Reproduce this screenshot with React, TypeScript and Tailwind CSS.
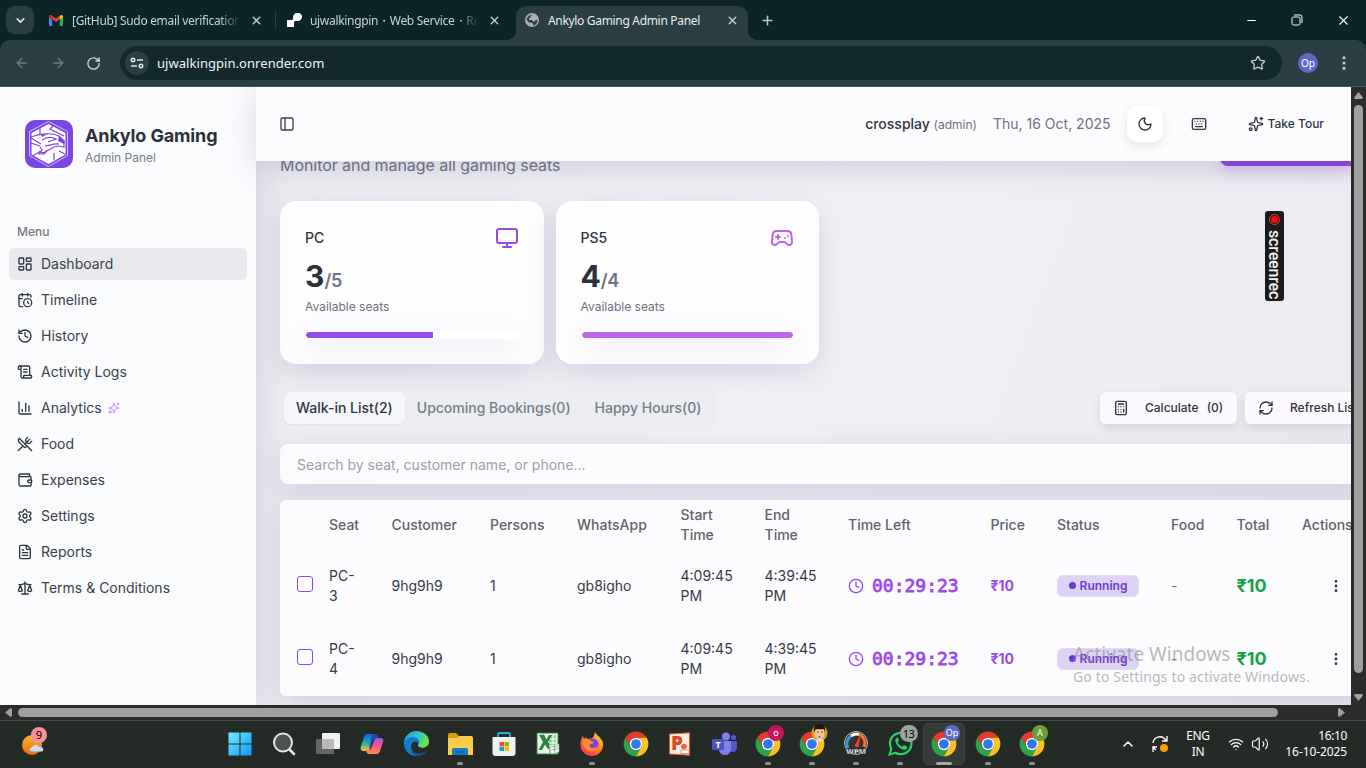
import React from "react";
import {
  ArrowLeft, ArrowRight, Calculator, CalendarClock, ChartColumn, ChevronDown, ChevronUp, Clock, EllipsisVertical,
  FileText, Gamepad2, History, Keyboard, LayoutDashboard, Minus, Monitor, Moon, PanelLeft, Plus, RefreshCw,
  RotateCw, Scale, ScrollText, Settings, Sparkles, Star, UtensilsCrossed, Volume2, Wallet, Wifi, X,
} from "lucide-react";

const UI = "font-['Noto_Sans','Open_Sans',sans-serif]";

function TabClose() {
  return <X size={13} strokeWidth={2.6} className="shrink-0 text-[#c3d0d1]" />;
}

function Gmail() {
  return (
    <svg width="14" height="11" viewBox="0 0 14 11" className="shrink-0">
      <path d="M0 1.5V10a1 1 0 0 0 1 1h2.2V4z" fill="#4285f4" />
      <path d="M14 1.5V10a1 1 0 0 1-1 1h-2.200V4z" fill="#34a853" />
      <path d="M0 1.500C0 .2 1.600-.4 2.700.4L7 3.700 11.300.4 10.800 4 7 6.900 3.200 4 0 2.500z" fill="#ea4335" />
      <path d="M10.800.8C12 -.4 14 0 14 1.600v1l-3.200 2.400z" fill="#fbbc04" />
      <path d="M0 1.500C0 .2 1.800-.4 3.200.8V5L0 2.600z" fill="#c5221f" />
    </svg>
  );
}

function BrowserTabs() {
  return (
    <div className={`flex h-10 items-center bg-[#0b2427] text-[12px] tracking-[-0.32px] text-[#c9d6d6] ${UI}`}>
      <div className="ml-1.5 flex size-7 items-center justify-center rounded-[9px] bg-[#293f44]">
        <ChevronDown size={13} strokeWidth={3} className="text-[#dfe8e8]" />
      </div>
      <div className="ml-[15px] flex w-[214px] items-center">
        <Gmail />
        <div className="mt-px ml-[9px] w-[168px] overflow-hidden whitespace-nowrap [mask-image:linear-gradient(to_right,#000_88%,transparent)]">
          [GitHub] Sudo email verification code
        </div>
        <div className="ml-[10px]"><TabClose /></div>
      </div>
      <div className="ml-[12px] h-4 w-px bg-[#2b4246]" />
      <div className="ml-[11px] flex w-[214px] items-center">
        <svg width="15" height="15" viewBox="0 0 15 15" className="shrink-0">
          <path d="M6 6c0-5 2-6 5-6s4 2 4 4-2 4-4 4H8l-1 1v5H0V7h5z" fill="#fff" />
        </svg>
        <div className="mt-px ml-2 w-[168px] overflow-hidden whitespace-nowrap [mask-image:linear-gradient(to_right,#000_88%,transparent)]">
          ujwalkingpin・Web Service・Render
        </div>
        <div className="ml-[10px]"><TabClose /></div>
      </div>
      <div className="relative ml-[15px] mt-1.5 flex h-[34px] w-[232px] items-center rounded-t-[10px] bg-[#293f44] text-[#e6eeee]">
        <span className="absolute bottom-0 -left-2.5 size-2.5 bg-[radial-gradient(circle_at_0_0,transparent_10px,#293f44_10.5px)]" />
        <span className="absolute -right-2.5 bottom-0 size-2.5 bg-[radial-gradient(circle_at_100%_0,transparent_10px,#293f44_10.5px)]" />
        <svg width="14" height="14" viewBox="0 0 14 14" className="mb-1.5 ml-[9px] shrink-0">
          <circle cx="7" cy="7" r="7" fill="#a9aeb5" />
          <path d="M8 1.500 5.500 3v1.600L4 5.500v1.500h3l1 1.500h2l.6-1.500L12.500 7 12 10l-2 2-2 .7.300-1.700-2-1.500H4L1.500 6.500 2 5 4 2.500z" fill="#293f44" />
        </svg>
        <div className="mb-[5px] ml-[9px] w-[178px] whitespace-nowrap">Ankylo Gaming Admin Panel</div>
        <div className="mb-1.5"><TabClose /></div>
      </div>
      <Plus size={15} strokeWidth={2.4} className="ml-[12px] text-[#b9c8c9]" />
      <div className="ml-auto mr-[15px] flex items-center gap-[33px] text-white">
        <Minus size={13} strokeWidth={1.900} />
        <svg width="12" height="12" viewBox="0 0 12 12" fill="none" stroke="currentColor">
          <rect x="1" y="3" width="8" height="8" rx="1.500" />
          <path d="M3 1h6a2 2 0 0 1 2 2v6" />
        </svg>
        <X size={15} strokeWidth={1.800} />
      </div>
    </div>
  );
}

function AddressBar() {
  return (
    <div className="bg-[#0b2427]">
      <div className={`flex h-[47px] items-center rounded-t-[10px] border-b border-[#45575b] bg-[#293f44] ${UI}`}>
        <ArrowLeft size={16} className="ml-3.5 text-[#6b7d80]" />
        <ArrowRight size={16} className="ml-5 text-[#6b7d80]" />
        <RotateCw size={15} strokeWidth={2.3} className="ml-5 text-[#c6d3d4]" />
        <div className="ml-[19px] flex h-[34px] w-[1162px] items-center rounded-full bg-[#11292d] pl-[5px] pr-4">
          <div className="flex size-6 items-center justify-center rounded-full bg-[#293f44]">
            <svg width="14" height="14" viewBox="0 0 14 14" fill="none" stroke="#e0e8e8" strokeWidth="1.600">
              <circle cx="3" cy="4" r="1.700" /><path d="M7 4h6M1 10h6" /><circle cx="11" cy="10" r="1.700" />
            </svg>
          </div>
          <div className="mt-px ml-2 text-[13px] tracking-[0.05px] text-[#f0f5f5]">ujwalkingpin.onrender.com</div>
          <Star size={16} strokeWidth={1.900} className="ml-auto text-[#c6d3d4]" />
        </div>
        <div className="ml-[16px] flex size-5 items-center justify-center rounded-full bg-[#5c6bc0] text-[10px] text-white">Op</div>
        <svg width="4" height="14" viewBox="0 0 4 14" className="ml-6 fill-[#c6d3d4]">
          <circle cx="2" cy="1.700" r="1.500" /><circle cx="2" cy="7" r="1.500" /><circle cx="2" cy="12.300" r="1.500" />
        </svg>
      </div>
    </div>
  );
}

function Logo() {
  return (
    <svg width="48" height="48" viewBox="0 0 48 48" className="shrink-0">
      <rect width="48" height="48" rx="10" fill="#7c45e0" />
      <path d="M23.500 1.500 42.500 11.500v24L23.500 46.500 4.500 35.500v-24z" fill="none" stroke="#d3c1f6" strokeWidth="1" />
      <path d="M23.500 4 40.500 13v21.500L23.500 44 6.500 34.500V13z" fill="#fff" />
      <g fill="none" stroke="#7c45e0" strokeWidth="1.200">
        <path d="M15 8v6M28 6l-3 3 14 7M34 31l6 3M29 40v-7M7 36l9-5" />
        <path d="M6 17c8-3 20-5 28-1l5 5v6l-6-1-4 1-7 4-3 3-5 0 3-4-2-3" />
        <path d="M17 20c6-4 10-3 14-1l-8 3M20 26c5 0 8-3 14-2M6 18l10 6M6 23l9 3" />
      </g>
      <path d="M34 16l6 5-1 3-6-3zM14 32l5 0 4-3-4 5zM16 15l7-1-6 3z" fill="#7c45e0" />
    </svg>
  );
}

const menu = [
  { icon: LayoutDashboard, label: "Dashboard" },
  { icon: CalendarClock, label: "Timeline" },
  { icon: History, label: "History" },
  { icon: ScrollText, label: "Activity Logs" },
  { icon: ChartColumn, label: "Analytics" },
  { icon: UtensilsCrossed, label: "Food" },
  { icon: Wallet, label: "Expenses" },
  { icon: Settings, label: "Settings" },
  { icon: FileText, label: "Reports" },
  { icon: Scale, label: "Terms & Conditions" },
];

function Sidebar() {
  return (
    <aside className="relative z-10 w-64 shrink-0 bg-[#fafbfd] px-[9px] pt-[33px] shadow-[4px_0_28px_rgba(90,80,160,0.16)]">
      <div className="flex items-center gap-3 pl-4">
        <Logo />
        <div>
          <div className="text-[18px] leading-[28px] font-bold tracking-[-0.13px] text-[#2b303b]">Ankylo Gaming</div>
          <div className="text-[12px] leading-4 text-[#747b8b]">Admin Panel</div>
        </div>
      </div>
      <div className="mt-12 flex h-8 items-center pl-2 text-[12px] font-medium text-[#747880]">Menu</div>
      <nav className="flex flex-col gap-1">
        {menu.map(({ icon: Icon, label }, i) => (
          <div key={label} className={`flex h-8 items-center gap-2 rounded-md px-2 text-[14px] leading-5 text-[#3a404c] ${i === 0 ? "bg-[#e8e9ed]" : ""}`}>
            <Icon size={16} className="text-[#2f3541]" />
            <span>{label}</span>
            {label === "Analytics" && <Sparkles size={12} className="-ml-0.5 text-[#c98bf3]" />}
          </div>
        ))}
      </nav>
    </aside>
  );
}

function Header() {
  return (
    <header className="relative z-20 flex h-[74px] shrink-0 items-center bg-[#fcfcfe] pl-[23px] pr-[27px] shadow-[0_6px_30px_rgba(80,70,150,0.2)]">
      <PanelLeft size={16} className="text-[#3a404c]" />
      <div className="ml-auto text-[14px] leading-5 font-medium text-[#2f3541]">
        crossplay <span className="text-[12px] font-normal text-[#6b7280]">(admin)</span>
      </div>
      <div className="ml-4 text-[14px] leading-5 text-[#6b7280]">Thu, 16 Oct, 2025</div>
      <div className="ml-4 flex size-9 items-center justify-center rounded-[10px] bg-white shadow-[0_4px_10px_rgba(60,60,90,0.12)]">
        <Moon size={16} className="text-[#2f3541]" />
      </div>
      <Keyboard size={16} className="ml-7 text-[#2f3541]" />
      <Sparkles size={16} className="ml-[41px] text-[#2f3541]" />
      <span className="ml-1 text-[12px] font-medium text-[#2f3541]">Take Tour</span>
    </header>
  );
}

function SeatCard({ name, free, total, icon, fill }: { name: string; free: number; total: number; icon: React.ReactNode; fill: string }) {
  return (
    <div className="h-[163px] w-[263.5px] rounded-2xl bg-[#fdfdfe] p-[25px] shadow-[0_8px_28px_rgba(80,70,150,0.16)]">
      <div className="flex h-6 items-center justify-between">
        <span className="text-[14px] leading-5 font-medium text-[#2f3541]">{name}</span>
        {icon}
      </div>
      <div className="mt-2 text-[30px] leading-9 font-bold text-[#2b303b]">
        {free}<span className="text-[18px] font-semibold tracking-[-0.3px] text-[#6b7280]">/{total}</span>
      </div>
      <div className="text-[12px] leading-4 text-[#6b7280]">Available seats</div>
      <div className="mt-4 h-2 overflow-hidden rounded-full border border-white bg-white shadow-[0_8px_28px_rgba(80,70,150,0.16)]">
        <div className={`h-full rounded-l-full ${fill}`} style={{ width: `${(free / total) * 100}%` }} />
      </div>
    </div>
  );
}

const gridCols = "grid grid-cols-[33px_62.5px_98.5px_87px_103.5px_84px_83.5px_142.5px_66.5px_114px_65.5px_65.5px_100px] items-center";

function BookingRow({ seat }: { seat: string }) {
  return (
    <div className={`${gridCols} h-[73px] text-[14px] leading-5 text-[#343a46]`}>
      <div className="mb-1 ml-[17px] size-4 rounded-[3px] border border-[#9145e6]" />
      <div className="px-4">PC-<br />{seat}</div>
      <div className="px-4">9hg9h9</div>
      <div className="px-4">1</div>
      <div className="px-4">gb8igho</div>
      <div className="px-4">4:09:45<br />PM</div>
      <div className="px-4">4:39:45<br />PM</div>
      <div className="flex items-center gap-2 pl-4 text-[#9a4be8]">
        <Clock size={16} className="shrink-0" />
        <span className="font-['DejaVu_Sans_Mono',monospace] text-[18px] [-webkit-text-stroke:0.8px_#9a4be8]">00:29:23</span>
      </div>
      <div className="pl-4 font-bold text-[#9a4be8]">₹10</div>
      <div className="pl-4">
        <div className="flex h-[22px] w-[82px] items-center justify-center gap-1 rounded-md border border-[#e3daf7] bg-[#dfd3f5] text-[12px] font-semibold text-[#6d38d2]">
          <span className="size-[7px] rounded-full bg-[#6d38d2]" />Running
        </div>
      </div>
      <div className="px-4 text-[#6b7280]">-</div>
      <div className="pl-4 text-[18px] font-bold text-[#16a34a]">₹10</div>
      <div className="flex justify-center"><EllipsisVertical size={16} strokeWidth={2.200} className="text-[#2f3541]" /></div>
    </div>
  );
}

function Dashboard() {
  return (
    <main className="min-h-0 flex-1 overflow-hidden bg-[linear-gradient(110deg,#ebecf0,#f1eff4_45%,#ece9f1)] pl-6">
      <div className="w-[1125px]">
        <div className="-mt-2 flex h-6 items-start justify-between">
          <p className="text-[16px] leading-6 tracking-[-0.06px] text-[#6b7280]">Monitor and manage all gaming seats</p>
          <div className="h-[13px] w-[185px] rounded-b-lg bg-[#8e44dc] shadow-[0_4px_14px_rgba(142,68,220,0.3)]" />
        </div>
        <div className="mt-6 flex gap-3">
          <SeatCard name="PC" free={3} total={5} fill="bg-[#944be8]" icon={<Monitor size={24} className="text-[#944be8]" />} />
          <SeatCard name="PS5" free={4} total={4} fill="rounded-r-full bg-[#bd66e6]" icon={<Gamepad2 size={24} className="text-[#bd66e6]" />} />
        </div>
        <div className="mt-6 flex h-10 items-center">
          <div className="flex h-10 w-[437px] items-center rounded-lg bg-[#eaecf0]/70 p-1 text-[14px] leading-5 font-medium whitespace-nowrap text-[#747b8b]">
            <span className="flex h-8 items-center rounded-md bg-[#f5f6f9] px-3 text-[#2f3541] shadow-[0_1px_2px_rgba(60,60,90,0.08)]">Walk-in List(2)</span>
            <span className="px-3">Upcoming Bookings(0)</span>
            <span className="px-3">Happy Hours(0)</span>
          </div>
          <div className="ml-[383px] flex h-8 w-[137px] items-center rounded-md bg-[#fbf9fd] pl-[13px] text-[12px] font-medium text-[#2f3541] shadow-[0_4px_10px_rgba(60,60,90,0.13)]">
            <Calculator size={16} />
            <span className="ml-4">Calculate</span><span className="ml-2">(0)</span>
          </div>
          <div className="ml-2 flex h-8 w-[150px] shrink-0 items-center rounded-md bg-[#fbf9fd] pl-[13px] text-[12px] font-medium whitespace-nowrap text-[#2f3541] shadow-[0_4px_10px_rgba(60,60,90,0.13)]">
            <RefreshCw size={16} /><span className="ml-4">Refresh List</span>
          </div>
        </div>
        <div className="mt-4 flex h-10 items-center rounded-lg bg-[#fcfbfe] pl-[17px] text-[14px] text-[#9ca1ac] shadow-[0_8px_28px_rgba(80,70,150,0.17)]">
          Search by seat, customer name, or phone...
        </div>
        <div className="relative mt-4 h-[196px] rounded-md bg-[#fcfbfe] shadow-[0_8px_28px_rgba(80,70,150,0.17)]">
          <div className={`${gridCols} h-[49px] pt-px text-[14px] leading-5 font-medium text-[#5e636c]`}>
            <div />
            <div className="px-4">Seat</div>
            <div className="px-4">Customer</div>
            <div className="px-4">Persons</div>
            <div className="px-4">WhatsApp</div>
            <div className="px-4">Start<br />Time</div>
            <div className="px-4">End<br />Time</div>
            <div className="px-4">Time Left</div>
            <div className="px-4">Price</div>
            <div className="px-4">Status</div>
            <div className="px-4">Food</div>
            <div className="px-4">Total</div>
            <div className="px-4">Actions</div>
          </div>
          <BookingRow seat="3" />
          <BookingRow seat="4" />
        </div>
      </div>
    </main>
  );
}

function VScroll() {
  return (
    <div className="flex w-[15px] flex-col items-center bg-[#2b2b2b]">
      <svg width="9" height="7" viewBox="0 0 9 7" className="mt-[5px] fill-[#9f9f9f]"><path d="M4.500 0 9 5.500 8 7H1L0 5.500z" /></svg>
      <div className="mt-1.5 h-[568px] w-[9px] rounded-full bg-[#9f9f9f]" />
      <svg width="9" height="7" viewBox="0 0 9 7" className="mt-[21px] fill-[#9f9f9f]"><path d="M4.500 7 9 1.500 8 0H1L0 1.500z" /></svg>
    </div>
  );
}

function HScroll() {
  return (
    <div className="flex h-[15px] items-center bg-[#2b2b2b]">
      <svg width="7" height="9" viewBox="0 0 7 9" className="ml-[5px] fill-[#9f9f9f]"><path d="M0 4.500 5.500 0 7 1v7L5.500 9z" /></svg>
      <div className="ml-1.5 h-[9px] w-[1260px] rounded-full bg-[#9f9f9f]" />
      <svg width="7" height="9" viewBox="0 0 7 9" className="ml-[60px] fill-[#9f9f9f]"><path d="M7 4.500 1.500 0 0 1v7l1.500 1z" /></svg>
    </div>
  );
}

function Chrome() {
  return (
    <svg width="26" height="26" viewBox="1 1 46 46">
      <path d="M24 13H43.050A22 22 0 0 0 4.950 13L14.470 29.500A11 11 0 0 1 24 13Z" fill="#e33b2e" />
      <path d="M4.950 13 14.470 29.500A11 11 0 0 0 33.530 29.500L24 46A22 22 0 0 1 4.950 13Z" fill="#2ba24c" />
      <path d="M43.050 13H24A11 11 0 0 1 33.530 29.500L24 46A22 22 0 0 0 43.050 13Z" fill="#fcc31e" />
      <circle cx="24" cy="24" r="11" fill="#fff" />
      <circle cx="24" cy="24" r="8.600" fill="#3277e8" />
    </svg>
  );
}

function Badge({ text, tone }: { text: string; tone: string }) {
  return <span className={`absolute -top-[6px] -right-[3px] flex size-4 items-center justify-center rounded-full text-[9px] leading-none ${tone}`}>{text}</span>;
}

function TaskItem({ children, running, active }: { children: React.ReactNode; running?: boolean; active?: boolean }) {
  return (
    <div className="flex w-11 justify-center">
      <div className={`relative flex h-[40px] w-10 items-center justify-center rounded ${active ? "bg-[#353c38] ring-1 ring-[#3e4541]" : ""}`}>
        <div className="relative">{children}</div>
        {running && <span className={`absolute -bottom-px h-[3px] rounded-full ${active ? "w-4 bg-[#a4aca5]" : "w-1.5 bg-[#8d928f]"}`} />}
      </div>
    </div>
  );
}

function Windows() {
  return (
    <svg width="24" height="24" viewBox="0 0 24 24">
      <linearGradient id="win" x1="0" y1="0" x2="1" y2="1" gradientUnits="objectBoundingBox"><stop stopColor="#73edff" /><stop offset="1" stopColor="#1296fa" /></linearGradient>
      <path d="M.5.500h11v11H.5zM12.500.500h11v11h-11zM.5 12.500h11v11H.5zM12.500 12.500h11v11h-11z" fill="url(#win)" />
    </svg>
  );
}

function Search() {
  return (
    <svg width="24" height="24" viewBox="0 0 24 24" fill="none">
      <path d="m17 17 5 5" stroke="#e5e6e8" strokeWidth="2.600" strokeLinecap="round" />
      <circle cx="11" cy="10.500" r="9" fill="#4d5252" stroke="#e5e6e8" strokeWidth="2" />
    </svg>
  );
}

function TaskView() {
  return (
    <svg width="24" height="24" viewBox="0 0 24 24">
      <rect x="6" y="1" width="18" height="16" rx="1" fill="#f1f1f1" />
      <rect x="0" y="7" width="18" height="15" rx="1" fill="#656767" />
      <path d="M6 7h12v10H6z" fill="#b9b9b9" />
    </svg>
  );
}

function Copilot() {
  return (
    <svg width="24" height="24" viewBox="0 0 24 24">
      <linearGradient id="cpA" x1="0" y1="0" x2="0" y2="1"><stop stopColor="#1464d8" /><stop offset=".5" stopColor="#22a7b5" /><stop offset="1" stopColor="#f0cc25" /></linearGradient>
      <linearGradient id="cpB" x1="0" y1="0" x2="0" y2="1"><stop stopColor="#a155e8" /><stop offset=".5" stopColor="#ef5c8b" /><stop offset="1" stopColor="#ff8a52" /></linearGradient>
      <path d="M7 2h8c2 0 3 2 3 4h-2c-2 0-3 1-4 4l-2 6c-.6 2-1.500 3-3 3H4c-3 0-4-2-3-5l3-9c.600-2 1.500-3 3-3z" fill="url(#cpA)" />
      <path d="M17 22H9c-2 0-3-2-3-4h2c2 0 3-1 4-4l2-5c.600-2 1.500-3 3-3h3c3 0 4 2 3 4l-3 9c-.600 2-1.500 3-3 3z" fill="url(#cpB)" />
      <path d="M12 2h3c2 0 3 2 3 4h-2c-1.500 0-2.500.700-3.200 2l-2 6c-.5 1-1 1.500-2 2z" fill="#173dbb" opacity=".75" />
    </svg>
  );
}

function Edge() {
  return (
    <svg width="25" height="25" viewBox="0 0 24 24">
      <linearGradient id="edA" x1="0" y1="0" x2="1" y2=".4"><stop stopColor="#239be0" /><stop offset=".6" stopColor="#35c6c4" /><stop offset="1" stopColor="#6be34e" /></linearGradient>
      <path d="M0 11C1 4 6 0 12 0c7 0 12 5 12 10 0 4-3 6-6 6-3 0-5-1-4.500-2.500C15 11 13 8 9 8c-4 0-7 2-9 6z" fill="url(#edA)" />
      <path d="M0 12c1-5 6-7 10-6 4 .8 5.500 4 4.500 6.500-.5-1.500-2-2.500-4-2.500-6 1-5 12 3 14C6 25 0 19 0 12z" fill="#147bcf" />
      <path d="M8 13c-2 5 2 9 7 8.500 3 0 6-1.800 7.500-3.500-2 4-6 6-10 6-5-.5-8-6-4.500-11z" fill="#1356a5" />
    </svg>
  );
}

function Folder() {
  return (
    <svg width="25" height="24" viewBox="0 0 25 24">
      <path d="M0 3a2 2 0 0 1 2-2h6l3 3v4H0z" fill="#d99c0d" />
      <path d="M0 6h9l2-2h12a2 2 0 0 1 2 2v17H0z" fill="#fbcc4b" />
      <path d="M4 23v-5a2 2 0 0 1 2-2h12a2 2 0 0 1 2 2v5z" fill="#137bcd" />
      <path d="M8 19h8v1.500H8z" fill="#075a9d" />
    </svg>
  );
}

function Store() {
  return (
    <svg width="24" height="24" viewBox="0 0 24 24">
      <path d="M6 7V2.500A1.500 1.500 0 0 1 7.500 1h9A1.500 1.500 0 0 1 18 2.500V7" fill="none" stroke="#28aceb" strokeWidth="1.800" />
      <path d="M.5 5h23v16a3 3 0 0 1-3 3h-17a3 3 0 0 1-3-3z" fill="#f1f1f1" />
      <path d="M7.500 10H12v4.300H7.500z" fill="#f25022" /><path d="M12.500 10H17v4.300h-4.500z" fill="#7fba00" />
      <path d="M7.500 14.800H12V19H7.500z" fill="#00a4ef" /><path d="M12.500 14.800H17V19h-4.500z" fill="#ffb900" />
    </svg>
  );
}

function Excel() {
  return (
    <svg width="24" height="24" viewBox="0 0 24 24">
      <path d="M1 1h21v21H1z" fill="#eff7ed" stroke="#308343" />
      <path d="M13 3h7v18h-7z" fill="#9acb94" />
      <path d="M14 7h7M14 11h7M17 3v17" stroke="#fff" />
      <path d="m3 3 5-.5 2.500 5L13 3h3l-4 7 4 7h-4l-3-4.500L6 18H2.500L7 10z" fill="#27833d" />
      <path d="m13 13 10-1v8l-8 2z" fill="#f6faf5" stroke="#74a578" strokeWidth=".6" /><path d="m14 15 8-1M15 18l7-1.500M18 13l1 7" stroke="#74a578" strokeWidth=".8" />
    </svg>
  );
}

function Firefox() {
  return (
    <svg width="24" height="24" viewBox="0 0 24 24">
      <linearGradient id="ff" x1="1" y1="0" x2=".2" y2="1"><stop stopColor="#ffe14a" /><stop offset=".45" stopColor="#ff8a24" /><stop offset="1" stopColor="#f12b6a" /></linearGradient>
      <path d="M15 0c1 3 4 4 6 7 2 2 2.500 5 2 7.500C22 20 17.500 24 12 24S1 20 .5 13.500C.2 10 1 7 3 4l1 3 2-2 1 2 4-.5c2 0 3-2 4-6.500z" fill="url(#ff)" />
      <circle cx="12.500" cy="12.500" r="6" fill="#7e42d9" />
      <path d="M3 8c3-2 6-1 8 1l3 1c-1 2-3 2-4 2-1 2 0 4 3 4 2 .3 4-1 5-2-1 5-7 7-11 4S2 11 3 8z" fill="#ff8d29" />
    </svg>
  );
}

function PowerPoint() {
  return (
    <svg width="24" height="24" viewBox="0 0 24 24">
      <path d="M1.500 2 21.500.8v22.400l-20-1.200z" fill="#fcebe3" stroke="#db5c2e" />
      <text x="9" y="18" textAnchor="middle" fontSize="19" fontWeight="800" fill="#d84c22" fontFamily="Open Sans, sans-serif">P</text>
      <circle cx="16" cy="14.500" r="3.500" fill="#e8683c" stroke="#fff" /><path d="M13 18h8v3.500h-8z" fill="#fff" stroke="#df6a43" strokeWidth=".7" />
    </svg>
  );
}

function Teams() {
  return (
    <svg width="25" height="24" viewBox="0 0 25 24">
      <circle cx="14" cy="4.500" r="4" fill="#7b83eb" /><circle cx="21.500" cy="5.500" r="2.600" fill="#5059c9" />
      <path d="M18 9h7v6c0 5-4 6-7 4z" fill="#5059c9" /><path d="M7 9h12v8c0 8-12 8-12 0z" fill="#7b83eb" />
      <rect x="0" y="7" width="12" height="11" rx="1" fill="#4b53bc" />
      <text x="6" y="15.800" textAnchor="middle" fontSize="9" fontWeight="700" fill="#fff" fontFamily="Open Sans, sans-serif">T</text>
    </svg>
  );
}

function Gauge() {
  return (
    <svg width="24" height="25" viewBox="0 0 24 25">
      <circle cx="12" cy="12" r="11.500" fill="#333" stroke="#bbb" />
      <path d="M4 17a9 9 0 0 1 3-12" fill="none" stroke="#3f96dc" strokeWidth="3" />
      <path d="M7 5a9 9 0 0 1 8-1.500" fill="none" stroke="#fff" strokeWidth="3" />
      <path d="M15 3.500A9 9 0 0 1 20 16" fill="none" stroke="#ef7626" strokeWidth="3" />
      <path d="m11 15 5-10-2 11z" fill="#f13e29" stroke="#f13e29" />
      <text x="12" y="22.500" textAnchor="middle" fontSize="7.500" fontWeight="800" fill="#fff" stroke="#222" strokeWidth=".3" fontFamily="Open Sans, sans-serif">WPM</text>
    </svg>
  );
}

function WhatsApp() {
  return (
    <svg width="25" height="25" viewBox="0 0 24 24">
      <path d="M1.500 22.500 3.200 17A10.300 10.300 0 1 1 7 20.900z" fill="#222b27" stroke="#2bd566" strokeWidth="2" />
      <path d="M8.500 6.500c-3 1.500-1 6 1.500 8.500s6 4 8 2l.3-2-3-1.600-1.600 1.600c-2-.7-3.700-2.500-4.400-4.300l1.200-1.400-1-2.800z" fill="#2bd566" />
    </svg>
  );
}

function Avatar() {
  return (
    <svg width="17" height="18" viewBox="0 0 17 18" className="absolute -top-[7px] -right-[3px]">
      <circle cx="8.500" cy="9" r="8" fill="#dba51a" />
      <path d="M4 6h9v6c-1 5-8 5-9 0z" fill="#edc3a1" /><path d="M3 8C2 3 5 0 9 0s6 4 5 8l-1-3H5z" fill="#171716" />
      <path d="M5 16c2-2 5-2 8 0l-4 2z" fill="#e9e4df" /><path d="M6 8h1.500M10 8h1.500M7.500 13h2" stroke="#4b3024" />
    </svg>
  );
}

function Taskbar() {
  return (
    <div className={`flex h-12 items-center border-t border-[#464b48] bg-[#242b27] pb-0.5 text-white ${UI}`}>
      <div className="w-[218px] pl-[21px]">
        <div className="relative h-7 w-7">
          <svg width="28" height="28" viewBox="0 0 28 28">
            <linearGradient id="sun" x1="0" y1="0" x2="0" y2="1"><stop stopColor="#f5b62a" /><stop offset="1" stopColor="#ef6a16" /></linearGradient>
            <circle cx="11" cy="15" r="10" fill="url(#sun)" />
            <path d="M11 21.500c-3 0-3-4 0-4 1-3 6-4 7-.5 5-1 6 4.500 2 4.500z" fill="#c7dcf9" />
          </svg>
          <span className="absolute -top-[3px] left-[10px] flex size-4 items-center justify-center rounded-full bg-[#fd8f98] text-[11px] leading-none text-black">9</span>
        </div>
      </div>
      <div className="flex">
        <TaskItem><Windows /></TaskItem>
        <TaskItem><Search /></TaskItem>
        <TaskItem><TaskView /></TaskItem>
        <TaskItem><Copilot /></TaskItem>
        <TaskItem><Edge /></TaskItem>
        <TaskItem running><Folder /></TaskItem>
        <TaskItem><Store /></TaskItem>
        <TaskItem><Excel /></TaskItem>
        <TaskItem running><Firefox /></TaskItem>
        <TaskItem><Chrome /></TaskItem>
        <TaskItem><PowerPoint /></TaskItem>
        <TaskItem><Teams /></TaskItem>
        <TaskItem running><Chrome /><Badge text="o" tone="bg-[#c2185b]" /></TaskItem>
        <TaskItem running><Chrome /><Avatar /></TaskItem>
        <TaskItem running><Gauge /></TaskItem>
        <TaskItem running>
          <WhatsApp />
          <span className="absolute -top-[6px] -right-[5px] flex h-[17px] w-[18px] items-center justify-center rounded-full bg-[#9aa59f] text-[11px] leading-none tracking-[-0.5px] text-black">13</span>
        </TaskItem>
        <TaskItem running active><Chrome /><Badge text="Op" tone="bg-[#5c6bc0]" /></TaskItem>
        <TaskItem running><Chrome /></TaskItem>
        <TaskItem running><Chrome /><Badge text="A" tone="bg-[#689f38]" /></TaskItem>
      </div>
      <ChevronUp size={16} strokeWidth={2.200} className="ml-[66px]" />
      <svg width="18" height="18" viewBox="0 0 18 18" fill="none" stroke="#fff" strokeWidth="1.300" className="ml-[15px]">
        <path d="M2 8a7 7 0 0 1 12-4l2 2M16 1v5h-5M5 15a7 7 0 0 1-3-4M2 17v-5h4" />
        <circle cx="13" cy="13" r="4" fill="#ff9913" stroke="none" />
      </svg>
      <div className="mt-px ml-[13px] w-[32px] text-center text-[12px] leading-4 tracking-[-0.3px]">ENG<br />IN</div>
      <Wifi size={16} strokeWidth={2} className="ml-[14px]" />
      <Volume2 size={18} strokeWidth={1.500} className="ml-[7px]" />
      <div className="mt-px ml-auto mr-[19px] text-right text-[12px] leading-4 tracking-[-0.1px]">
        <span className="tracking-[-0.4px]">16:10</span><br />16-10-2025
      </div>
    </div>
  );
}

export default function App() {
  return (
    <div className="relative flex h-[768px] w-[1366px] flex-col overflow-hidden font-['Inter',sans-serif]">
      <BrowserTabs />
      <AddressBar />
      <div className="flex h-[618px]">
        <div className="flex w-[1351px] overflow-hidden">
          <Sidebar />
          <div className="flex min-w-0 flex-1 flex-col">
            <Header />
            <Dashboard />
          </div>
        </div>
        <VScroll />
      </div>
      <HScroll />
      <Taskbar />
      <div className="absolute top-[211px] left-[1265px] z-30 flex h-[90px] w-[19px] flex-col items-center rounded-[3px] bg-[#1b1b1b] pt-[3px]">
        <span className="flex size-[11px] shrink-0 items-center justify-center rounded-full border border-[#e03b3b]"><span className="size-[7px] rounded-full bg-[#ff0a0a]" /></span>
        <span className="mt-[5px] font-['Roboto',sans-serif] text-[16px] leading-[19px] font-medium tracking-[-0.15px] text-[#f2f2f2] [writing-mode:vertical-rl]">screenrec</span>
      </div>
      <div className={`absolute top-[642px] left-[1073px] z-30 whitespace-nowrap text-[#8a8a8a]/60 ${UI}`}>
        <div className="text-[19px] leading-6 tracking-[0.03px]">Activate Windows</div>
        <div className="text-[14px] leading-[22px] tracking-[0.14px]">Go to Settings to activate Windows.</div>
      </div>
    </div>
  );
}
